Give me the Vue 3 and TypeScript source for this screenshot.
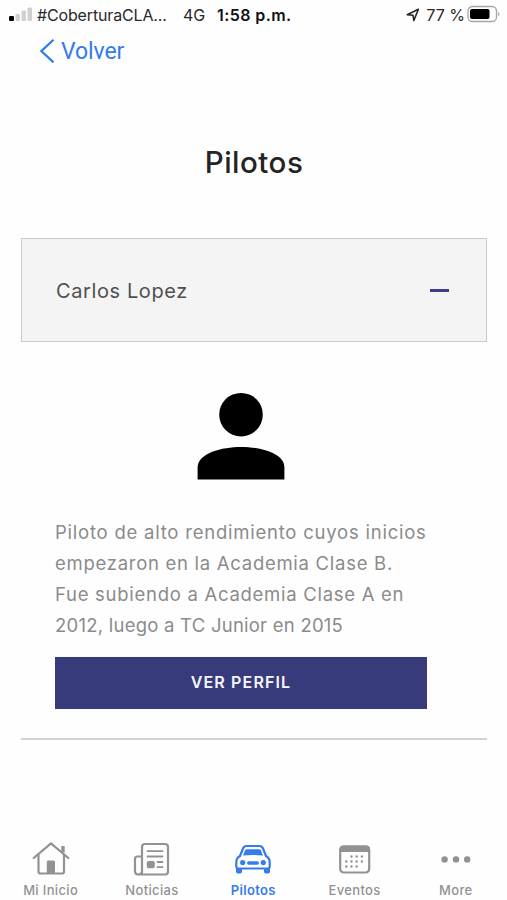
<script setup lang="ts">
import { ref } from 'vue'

interface Tab {
  id: string
  label: string
}

const tabs: Tab[] = [
  { id: 'home', label: 'Mi Inicio' },
  { id: 'news', label: 'Noticias' },
  { id: 'pilots', label: 'Pilotos' },
  { id: 'events', label: 'Eventos' },
  { id: 'more', label: 'More' },
]

const bio: string[] = [
  'Piloto de alto rendimiento cuyos inicios',
  'empezaron en la Academia Clase B.',
  'Fue subiendo a Academia Clase A en',
  '2012, luego a TC Junior en 2015',
]

const active = ref('pilots')
const expanded = ref(true)
</script>

<template>
  <div class="screen">
    <header class="status">
      <svg class="signal" width="24" height="16" viewBox="0 0 24 16">
        <rect x="0" y="10" width="5" height="5" rx="1.2" fill="#000" />
        <rect x="6.5" y="8" width="4.5" height="7" rx="1.2" fill="#d0d0d2" />
        <rect x="12.5" y="4.5" width="4.5" height="10.5" rx="1.2" fill="#d0d0d2" />
        <rect x="18.5" y="1.5" width="4.5" height="13.5" rx="1.2" fill="#d0d0d2" />
      </svg>
      <span class="carrier">#CoberturaCLA...</span>
      <span class="network">4G</span>
      <span class="clock">1:58 p.m.</span>
      <svg class="location" width="14" height="14" viewBox="0 0 14 14">
        <path d="M12.4 1.3 1.2 6.7 7 7.2 7.8 12.6Z" fill="none" stroke="#222" stroke-width="1.5" stroke-linejoin="round" />
      </svg>
      <span class="percent">77 %</span>
      <svg class="battery" width="34" height="18" viewBox="0 0 34 18">
        <rect x="1" y="1.5" width="28.5" height="15" rx="4.5" fill="#fff" stroke="#a5a5a5" stroke-width="1.3" />
        <rect x="3" y="4" width="19.5" height="10" rx="2" fill="#000" />
        <path d="M31.2 6.7c1.5.8 1.5 3.8 0 4.6z" fill="#999" />
      </svg>
    </header>

    <nav class="back">
      <svg width="16" height="26" viewBox="0 0 16 26">
        <path d="M14.5 1.8 2.300 13.1 14.5 24.4" fill="none" stroke="#367bea" stroke-width="2.2" />
      </svg>
      <a class="back-label">Volver</a>
    </nav>

    <main class="content">
      <h1 class="title">Pilotos</h1>

      <section class="accordion">
        <button class="accordion-head" type="button" @click="expanded = !expanded">
          <span class="name">Carlos Lopez</span>
          <span class="minus"></span>
        </button>

        <div v-if="expanded" class="panel">
          <svg class="avatar" width="88" height="88" viewBox="0 0 88 88">
            <circle cx="44" cy="22.7" r="21.8" />
            <path d="M.6 87.500V75.500C.6 61 25 54.900 44 54.900S87.400 61 87.400 75.500V87.500Z" />
          </svg>
          <p class="bio">
            <span v-for="(line, i) in bio" :key="line" class="line" :class="'line-' + i">{{ line }}</span>
          </p>
          <button class="profile" type="button">VER PERFIL</button>
        </div>
      </section>
    </main>

    <footer class="tabs">
      <a v-for="tab in tabs" :key="tab.id" class="tab" :class="[tab.id, { active: tab.id === active }]" @click="active = tab.id">
        <svg class="icon" width="40" height="36" viewBox="0 0 40 36" fill="none" stroke="currentColor" stroke-width="2.2" stroke-linecap="round" stroke-linejoin="round">
          <template v-if="tab.id === 'home'">
            <path d="M2.700 17 20 2.300 37.300 17M7.500 14V30.500Q7.500 32.500 9.500 32.500H31Q33 32.500 33 30.500V14" />
            <path d="M32 11.500V5" stroke-width="3.400" stroke-linecap="butt" />
            <path d="M15.800 32V21Q15.800 19.500 17.300 19.500H22.500Q24 19.500 24 21V32Z" fill="currentColor" stroke="none" />
          </template>
          <template v-else-if="tab.id === 'news'">
            <path d="M10 33.500V6Q10 3 13 3H33Q36 3 36 6V30.500Q36 33.500 33 33.500H6.500Q3 33.500 3 30.500V18Q3 15.500 5.500 15.500H10M10 30Q10 33.500 6.500 33.500" />
            <path d="M15.500 10.200H30.500M15.500 15.500H30.500M25.500 21H30.500M25.500 26.200H30.500" stroke-width="1.800" />
            <rect x="14.800" y="20" width="8" height="7.300" rx="1.800" fill="currentColor" stroke="none" />
          </template>
          <template v-else-if="tab.id === 'pilots'">
            <path d="M7 15 10 7.500Q11 5 13.500 5H26.500Q29 5 30 7.500L33 15Q36.700 17 36.700 21V25.500Q36.700 27.500 34.500 27.500H5.500Q3.300 27.500 3.300 25.500V21Q3.300 17 7 15Z" />
            <path d="M10 14.500 12 9.500Q12.500 8.300 14 8.300H26Q27.500 8.300 28 9.500L30 14.500Q20 13.600 10 14.500ZM3 27H9V30.500Q9 32.500 6 32.500T3 30.500ZM31 27H37V30.500Q37 32.500 34 32.500T31 30.500Z" fill="currentColor" stroke="none" />
            <circle cx="9.700" cy="21.600" r="2.600" fill="currentColor" stroke="none" />
            <circle cx="30.300" cy="21.600" r="2.600" fill="currentColor" stroke="none" />
            <path d="M15.800 22H24.200" stroke-width="3.500" />
          </template>
          <template v-else-if="tab.id === 'events'">
            <rect x="5.200" y="5.500" width="29" height="26" rx="3.500" />
            <path d="M4.500 11V8Q4.500 4.500 8 4.500H31.500Q35 4.500 35 8V11Z" fill="currentColor" stroke="none" />
            <path d="M16.500 15.500H28.500M11.300 20.500H28.500M11.300 25.500H24" stroke-width="2.400" stroke-dasharray="0 5.200" />
          </template>
          <g v-else fill="currentColor" stroke="none">
            <circle cx="8.600" cy="18.400" r="3.200" />
            <circle cx="20" cy="18.400" r="3.200" />
            <circle cx="31.200" cy="18.400" r="3.200" />
          </g>
        </svg>
        <span class="tab-label">{{ tab.label }}</span>
      </a>
    </footer>
  </div>
</template>

<style>
body {
  background: #fefefe;
}
</style>

<style scoped>
.screen {
  box-sizing: border-box;
  width: 507px;
  height: 900px;
  display: flex;
  flex-direction: column;
  overflow: hidden;
  background: #fefefe;
  font-family: Inter, "Liberation Sans", sans-serif;
}
.status {
  height: 30px;
  display: flex;
  align-items: center;
  padding: 0 6px 0 9px;
  box-sizing: border-box;
  font-size: 16px;
  color: #292929;
  white-space: nowrap;
}
.signal {
  margin-top: -2px;
}
.carrier {
  width: 146px;
  margin-left: 4px;
  letter-spacing: -0.150px;
}
.network {
  width: 34px;
}
.clock {
  font-weight: 600;
  letter-spacing: 0.420px;
  color: #111;
}
.location {
  margin-left: auto;
}
.percent {
  margin: 0 2px 0 6px;
}
.battery {
  margin-top: -2px;
}
.back {
  height: 42px;
  display: flex;
  align-items: center;
  gap: 6px;
  padding-left: 39px;
}
.back-label {
  padding-top: 2px;
  font-family: Roboto, sans-serif;
  font-size: 23px;
  line-height: 28px;
  letter-spacing: -0.100px;
  color: #367bea;
}
.content {
  flex: 1;
  padding: 0 20px 0 21px;
}
.title {
  margin: 70px 0 56px;
  height: 40px;
  line-height: 40px;
  text-align: center;
  font-size: 29.500px;
  font-weight: 500;
  letter-spacing: 0.500px;
  color: #242424;
}
.accordion {
  border-bottom: 2px solid #d2d2d2;
  height: 502px;
  box-sizing: border-box;
}
.accordion-head {
  width: 100%;
  height: 104px;
  box-sizing: border-box;
  display: flex;
  align-items: center;
  justify-content: space-between;
  padding: 0 37px 0 34px;
  border: 1.500px solid #cacaca;
  background: #f4f4f4;
  font-family: inherit;
}
.name {
  padding-top: 1px;
  font-size: 20px;
  font-weight: 400;
  letter-spacing: 0.600px;
  color: #505050;
}
.minus {
  width: 19px;
  height: 3px;
  background: #3d3f80;
}
.panel {
  display: flex;
  flex-direction: column;
  padding: 50px 60px 0 34px;
}
.avatar {
  align-self: center;
}
.bio {
  margin: 37px 0 16px;
  display: flex;
  flex-direction: column;
  font-size: 18.500px;
  line-height: 31px;
  color: #8b8b8b;
  white-space: nowrap;
}
.line {
  align-self: flex-start;
  letter-spacing: 0.720px;
}
.line-0 {
  letter-spacing: 0.770px;
}
.line-3 {
  letter-spacing: 0.240px;
}
.profile {
  height: 52px;
  padding: 0 0 2px;
  border: 0;
  background: #383b7b;
  color: #f5f7ff;
  font-family: inherit;
  font-size: 16px;
  font-weight: 600;
  letter-spacing: 1.150px;
}
.tabs {
  height: 60px;
  display: grid;
  grid-template-columns: repeat(5, 101.300px);
}
.tab {
  display: flex;
  flex-direction: column;
  align-items: center;
  padding-top: 1px;
  color: #929292;
}
.active {
  color: #367bea;
}
.tab-label {
  margin-top: 4px;
  font-size: 13px;
  line-height: 18px;
  font-weight: 500;
  letter-spacing: 0.350px;
}
.active .tab-label {
  font-weight: 600;
}
</style>
